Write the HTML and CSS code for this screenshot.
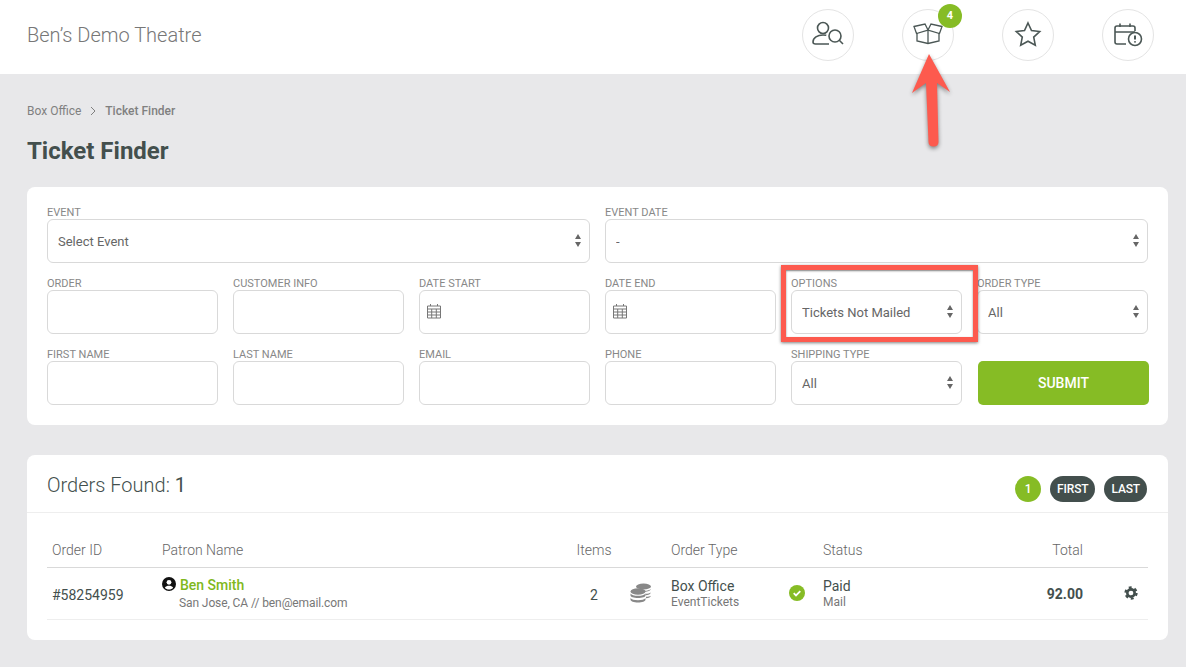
FILE: index.html
```html
<!DOCTYPE html>
<html lang="en">
<head>
    <meta charset="UTF-8">
    <meta name="viewport" content="width=device-width, initial-scale=1.0">
    <title>Ticket Finder</title>
    <link rel="stylesheet" href="styles.css">
</head>
<body>
    <header class="topbar">
        <div class="brand">Ben’s Demo Theatre</div>
        <nav class="top-icons">
            <a class="round-icon">
                <svg viewBox="0 0 52 52" class="line-icon">
                    <circle cx="21" cy="19" r="5.5"/>
                    <path d="M27 35H13.5c-1.5 0-2.5-.8-2.5-2 0-4.500 4.500-7 10-7 1.300 0 2.300.1 3.300.3"/>
                    <circle cx="33" cy="27" r="6"/>
                    <path d="M37.300 31.300l3.700 3.700"/>
                </svg>
            </a>
            <a class="round-icon">
                <svg viewBox="0 0 52 52" class="line-icon box-icon">
                    <path d="M15 24v8l11 2.500 11-2.500v-8"/>
                    <path d="M26 22v12.500"/>
                    <path d="M12 17.500l11-2.500 3 6-11.500 3.500zM40 17.500L29 15l-3 6 11.500 3.500z"/>
                </svg>
                <span class="badge">4</span>
            </a>
            <a class="round-icon">
                <svg viewBox="0 0 52 52" class="line-icon">
                    <path d="M26 14l3.500 7.500 8.200 1-6 5.600 1.600 8.100-7.300-4-7.300 4 1.600-8.100-6-5.600 8.200-1z"/>
                </svg>
            </a>
            <a class="round-icon">
                <svg viewBox="0 0 52 52" class="line-icon">
                    <path d="M24 35h-9c-1.200 0-2-.8-2-2V19c0-1.200.8-2 2-2h16c1.200 0 2 .8 2 2v3"/>
                    <path d="M13 23h20M18 14.500V18M28 14.500V18"/>
                    <circle cx="33" cy="30" r="6.500"/>
                    <path d="M33 26.500v4M33 32.300v1.200" class="thick"/>
                </svg>
            </a>
        </nav>
    </header>

    <main class="page">
        <div class="crumbs">
            <span>Box Office</span>
            <svg viewBox="0 0 8 10" class="crumb-sep"><path d="M2 1l4 4-4 4"/></svg>
            <b>Ticket Finder</b>
        </div>
        <h1 class="page-title">Ticket Finder</h1>

        <section class="card search-card">
            <form class="search-form">
                <div class="field wide">
                    <label>EVENT</label>
                    <div class="select-wrap">
                        <select><option>Select Event</option></select>
                    </div>
                </div>
                <div class="field wide">
                    <label>EVENT DATE</label>
                    <div class="select-wrap">
                        <select><option>-</option></select>
                    </div>
                </div>

                <div class="field"><label>ORDER</label><input type="text"></div>
                <div class="field"><label>CUSTOMER INFO</label><input type="text"></div>
                <div class="field">
                    <label>DATE START</label>
                    <div class="date-wrap">
                        <svg viewBox="0 0 14 16" class="cal-icon"><path d="M.5 3h13v12H.5zM.5 6h13M.5 9h13M.5 12h13M4.700 6v9M9.300 6v9M3.500 1v2M10.500 1v2"/></svg>
                        <input type="text">
                    </div>
                </div>
                <div class="field">
                    <label>DATE END</label>
                    <div class="date-wrap">
                        <svg viewBox="0 0 14 16" class="cal-icon"><path d="M.5 3h13v12H.5zM.5 6h13M.5 9h13M.5 12h13M4.700 6v9M9.300 6v9M3.500 1v2M10.500 1v2"/></svg>
                        <input type="text">
                    </div>
                </div>
                <div class="field">
                    <label>OPTIONS</label>
                    <div class="select-wrap">
                        <select><option>Tickets Not Mailed</option></select>
                    </div>
                </div>
                <div class="field">
                    <label>ORDER TYPE</label>
                    <div class="select-wrap">
                        <select><option>All</option></select>
                    </div>
                </div>

                <div class="field"><label>FIRST NAME</label><input type="text"></div>
                <div class="field"><label>LAST NAME</label><input type="text"></div>
                <div class="field"><label>EMAIL</label><input type="text"></div>
                <div class="field"><label>PHONE</label><input type="text"></div>
                <div class="field">
                    <label>SHIPPING TYPE</label>
                    <div class="select-wrap">
                        <select><option>All</option></select>
                    </div>
                </div>
                <button type="button" class="submit-btn">SUBMIT</button>
            </form>
        </section>

        <section class="card orders-card">
            <div class="orders-head">
                <h2>Orders Found: <span>1</span></h2>
                <div class="pager">
                    <a class="pill current">1</a>
                    <a class="pill">FIRST</a>
                    <a class="pill">LAST</a>
                </div>
            </div>
            <table class="orders">
                <colgroup>
                    <col class="c-id"><col class="c-patron"><col class="c-items"><col class="c-coins">
                    <col class="c-type"><col class="c-check"><col class="c-status"><col class="c-total"><col class="c-gear">
                </colgroup>
                <thead>
                    <tr>
                        <th>Order ID</th>
                        <th>Patron Name</th>
                        <th class="mid">Items</th>
                        <th></th>
                        <th>Order Type</th>
                        <th></th>
                        <th>Status</th>
                        <th class="right">Total</th>
                        <th></th>
                    </tr>
                </thead>
                <tbody>
                    <tr>
                        <td class="order-id">#58254959</td>
                        <td class="patron-cell">
                            <div class="patron">
                                <svg viewBox="0 0 14 14" class="person-icon">
                                    <circle cx="7" cy="7" r="7" fill="#111"/>
                                    <circle cx="7" cy="5.300" r="2.400" fill="#fff"/>
                                    <path d="M2.800 10.800C3.800 9.200 5.300 8.700 7 8.700s3.200.5 4.200 2.100C10.200 12 8.700 12.600 7 12.600s-3.200-.6-4.200-1.800z" fill="#fff"/>
                                </svg>
                                <a class="patron-name">Ben Smith</a>
                            </div>
                            <div class="sub patron-sub">San Jose, CA // ben@email.com</div>
                        </td>
                        <td class="mid count">2</td>
                        <td>
                            <svg viewBox="0 0 22 20" class="coins-icon">
                                <ellipse cx="13.500" cy="3.500" rx="7.500" ry="3"/>
                                <path d="M20.800 6c0 1.500-2.800 2.800-6.300 2.800v-1c3 0 5.300-.6 6.300-1.800zM20.800 9.500c0 1.500-2.500 2.700-5.300 2.800v-1.500c2.300-.1 4.300-.5 5.300-1.300zM20.800 12.700c0 1.300-2 2.300-4.800 2.600v-1.500c2-.1 3.800-.5 4.800-1.100z"/>
                                <ellipse cx="8" cy="8.500" rx="7.500" ry="3.200"/>
                                <path d="M.5 10.500c1 1.500 3.800 2.300 7.500 2.300s6.500-.8 7.500-2.300v2c0 1.400-3.300 2.500-7.500 2.500S.5 13.900.5 12.500zM.5 15c1 1.500 3.800 2.200 7.500 2.200s6.500-.7 7.500-2.200v1.800c0 1.500-3.300 2.700-7.500 2.700S.5 18.300.5 16.800z"/>
                            </svg>
                        </td>
                        <td>
                            <div class="main-line">Box Office</div>
                            <div class="sub">EventTickets</div>
                        </td>
                        <td>
                            <svg viewBox="0 0 16 16" class="check-icon">
                                <circle cx="8" cy="8" r="8" fill="#86bc25"/>
                                <path d="M4.700 8.200l2.300 2.200 4.300-4.200" fill="none" stroke="#fff" stroke-width="1.800"/>
                            </svg>
                        </td>
                        <td>
                            <div class="main-line">Paid</div>
                            <div class="sub">Mail</div>
                        </td>
                        <td class="right total">92.00</td>
                        <td>
                            <svg viewBox="0 0 16 16" class="gear-icon">
                                <circle cx="8" cy="8" r="4.200" fill="none" stroke="#434f4d" stroke-width="3"/>
                                <circle cx="8" cy="8" r="6.300" fill="none" stroke="#434f4d" stroke-width="2.600" stroke-dasharray="3.300 3.300"/>
                            </svg>
                        </td>
                    </tr>
                </tbody>
            </table>
        </section>
    </main>

    <!-- annotations on top of the screenshot -->
    <div class="mark-box"></div>
    <svg class="mark-arrow" viewBox="0 0 60 110">
        <path d="M19 0L40 38 27 29 28.500 88c0 3-2 4.500-5 4.500s-5-1.500-5-4.500L16 29 2 39z" transform="translate(0 2)" fill="#fd5a4e"/>
    </svg>
</body>
</html>
```
FILE: styles.css
```css
* {
    box-sizing: border-box;
}
body {
    margin: 0;
    position: relative;
    background-color: #e8e8ea;
    font-family: Roboto, "Liberation Sans", sans-serif;
    color: #434f4d;
}
.topbar {
    height: 74px;
    background-color: #fff;
    display: flex;
    align-items: center;
    justify-content: space-between;
    padding: 0 32px 4px 27px;
}
.brand {
    font-size: 20px;
    font-weight: 300;
    color: #777;
}
.top-icons {
    display: flex;
    gap: 48px;
}
.round-icon {
    position: relative;
    width: 52px;
    height: 52px;
    border: 1px solid #e4e4e4;
    border-radius: 50%;
    display: block;
}
.line-icon {
    position: absolute;
    left: -1px;
    top: -1px;
    width: 52px;
    height: 52px;
    fill: none;
    stroke: #4b5755;
    stroke-width: 1.600;
}
.line-icon.box-icon {
    stroke-width: 1.300;
}
.line-icon .thick {
    stroke-width: 2;
}
.badge {
    position: absolute;
    left: 35px;
    top: -6px;
    width: 24px;
    height: 24px;
    border-radius: 50%;
    background-color: #86bc25;
    color: #fff;
    font-size: 11px;
    font-weight: 700;
    line-height: 24px;
    text-align: center;
}
.page {
    padding: 29px 18px 27px 27px;
}
.crumbs {
    display: flex;
    align-items: center;
    font-size: 12px;
    line-height: 16px;
    color: #808080;
}
.crumbs b {
    font-weight: 500;
}
.crumb-sep {
    width: 8px;
    height: 10px;
    margin: 0 8px;
    fill: none;
    stroke: #808080;
    stroke-width: 1;
}
.page-title {
    margin: 17px 0 21px;
    font-size: 24px;
    line-height: 30px;
    font-weight: 700;
}
.card {
    background-color: #fff;
    border-radius: 8px;
}
.search-card {
    padding: 19px 20px 20px;
    height: 238px;
}
.search-form {
    display: grid;
    grid-template-columns: repeat(6, 171px);
    column-gap: 15px;
    row-gap: 14px;
}
.field {
    min-width: 0;
}
.wide {
    grid-column: span 3;
}
.field label {
    display: block;
    height: 13px;
    font-size: 11px;
    line-height: 13px;
    font-weight: 400;
    color: #888;
    white-space: nowrap;
}
.field input,
.field select {
    display: block;
    width: 100%;
    height: 44px;
    border: 1px solid #d9d9d9;
    border-radius: 6px;
    background-color: #fff;
    padding: 0 10px;
    font-family: inherit;
    font-size: 13px;
    color: #666;
    appearance: none;
    outline: none;
}
.select-wrap,
.date-wrap {
    position: relative;
}
/* double arrows of the selects */
.select-wrap::before,
.select-wrap::after {
    content: "";
    position: absolute;
    right: 9px;
    border-left: 3.500px solid transparent;
    border-right: 3.500px solid transparent;
}
.select-wrap::before {
    top: 15px;
    border-bottom: 5px solid #666;
}
.select-wrap::after {
    top: 23px;
    border-top: 5px solid #666;
}
.cal-icon {
    position: absolute;
    left: 8px;
    top: 13px;
    width: 14px;
    height: 16px;
    fill: none;
    stroke: #777;
    stroke-width: 1;
}
.submit-btn {
    align-self: end;
    width: 171px;
    height: 44px;
    margin-left: 1px;
    border: none;
    border-radius: 5px;
    background-color: #86bc25;
    color: #fff;
    font-family: inherit;
    font-size: 14px;
    font-weight: 500;
}
.orders-card {
    margin-top: 30px;
    height: 185px;
    padding-bottom: 20px;
}
.orders-head {
    height: 58px;
    border-bottom: 1px solid #eee;
    display: flex;
    align-items: center;
    justify-content: space-between;
    padding: 0 21px 0 20px;
}
.orders-head h2 {
    margin: 0;
    padding-top: 3px;
    font-size: 20px;
    line-height: 54px;
    font-weight: 300;
    color: #434f4d;
}
.orders-head h2 span {
    font-weight: 400;
}
.pager {
    display: flex;
    gap: 9px;
    margin-top: 10px;
}
.pill {
    height: 26px;
    padding: 0 7px;
    border-radius: 13px;
    background-color: #434f4d;
    color: #fff;
    font-size: 12px;
    font-weight: 500;
    line-height: 26px;
    letter-spacing: -.15px;
}
.pill.current {
    width: 26px;
    padding: 0;
    text-align: center;
    background-color: #86bc25;
}
.orders {
    width: 1101px;
    margin-left: 20px;
    table-layout: fixed;
    border-collapse: collapse;
}
.c-id { width: 110px; }
.c-patron { width: 410px; }
.c-items { width: 54px; }
.c-coins { width: 45px; }
.c-type { width: 118px; }
.c-check { width: 34px; }
.c-status { width: 160px; }
.c-total { width: 105px; }
.c-gear { width: 65px; }
.orders th {
    height: 54px;
    padding: 20px 5px 0;
    border-bottom: 1px solid #d9d9d9;
    font-size: 14px;
    font-weight: 300;
    text-align: left;
    color: #666;
    white-space: nowrap;
}
.orders td {
    height: 52px;
    padding: 0 5px;
    border-bottom: 1px solid #eee;
    font-size: 14px;
    color: #434f4d;
    white-space: nowrap;
}
.orders th.mid,
.orders td.mid {
    text-align: center;
}
.orders th.right,
.orders td.right {
    text-align: right;
    padding-right: 0;
}
.orders td.order-id,
.orders td.count {
    padding-top: 3px;
}
.orders td.patron-cell {
    padding-top: 2px;
}
.patron {
    display: flex;
    align-items: center;
    gap: 4px;
    height: 18px;
    margin-top: -2px;
}
.person-icon {
    width: 14px;
    height: 14px;
    margin-top: -2px;
}
.patron-name {
    font-size: 14px;
    font-weight: 500;
    color: #7fb81c;
}
.sub {
    font-size: 12px;
    line-height: 14px;
    color: #777;
}
.patron-sub {
    padding-left: 17px;
    padding-top: 2px;
    letter-spacing: -.1px;
}
.main-line {
    font-size: 14px;
    line-height: 17px;
}
.coins-icon {
    display: block;
    width: 22px;
    height: 20px;
    margin-left: 4px;
    fill: #888;
}
.check-icon {
    display: block;
    width: 16px;
    height: 16px;
}
.orders td.total {
    padding-top: 2px;
    font-weight: 700;
}
.gear-icon {
    display: block;
    width: 14px;
    height: 14px;
    margin-left: 36px;
}
.mark-box {
    position: absolute;
    left: 781px;
    top: 265px;
    width: 197px;
    height: 77px;
    border: 5px solid #fd5a4e;
    box-shadow: 0 1px 3px rgba(0, 0, 0, .5), inset 0 1px 2px rgba(0, 0, 0, .5);
}
.mark-arrow {
    position: absolute;
    left: 910px;
    top: 52px;
    width: 60px;
    height: 110px;
    filter: drop-shadow(0 2px 2px rgba(0, 0, 0, .45));
}
```
